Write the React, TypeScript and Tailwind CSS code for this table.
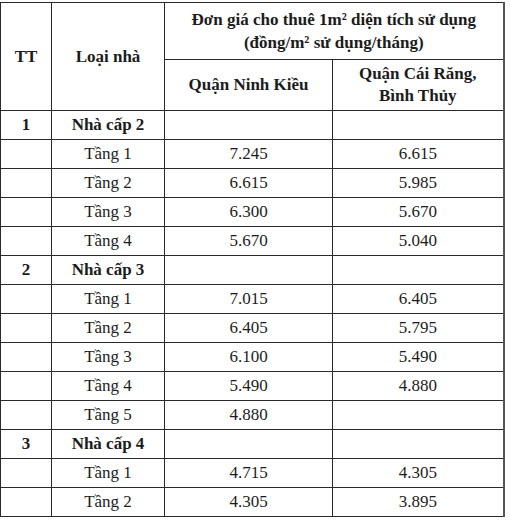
const groups = [
  {
    tt: '1',
    name: 'Nhà cấp 2',
    rows: [
      ['Tầng 1', '7.245', '6.615'],
      ['Tầng 2', '6.615', '5.985'],
      ['Tầng 3', '6.300', '5.670'],
      ['Tầng 4', '5.670', '5.040'],
    ],
  },
  {
    tt: '2',
    name: 'Nhà cấp 3',
    rows: [
      ['Tầng 1', '7.015', '6.405'],
      ['Tầng 2', '6.405', '5.795'],
      ['Tầng 3', '6.100', '5.490'],
      ['Tầng 4', '5.490', '4.880'],
      ['Tầng 5', '4.880', ''],
    ],
  },
  {
    tt: '3',
    name: 'Nhà cấp 4',
    rows: [
      ['Tầng 1', '4.715', '4.305'],
      ['Tầng 2', '4.305', '3.895'],
    ],
  },
];

const cell = 'border border-[#2a2a2a] text-center align-middle p-0';

export default function App() {
  return (
    <div className="w-[510px] h-[526px] bg-white pt-[2px] text-[#1c1c1c] font-['Liberation_Serif',serif] text-[17px]">
      <table className="table-fixed border-collapse w-[503px] border-r-2 border-r-[#555]">
        <colgroup>
          <col className="w-[51px]" />
          <col className="w-[113px]" />
          <col className="w-[168px]" />
          <col className="w-[171px]" />
        </colgroup>
        <thead>
          <tr className="h-[57px]">
            <th rowSpan={2} className={`${cell} font-bold`}>TT</th>
            <th rowSpan={2} className={`${cell} font-bold`}>Loại nhà</th>
            <th colSpan={2} className={`${cell} font-bold leading-[23px] border-r-2 border-r-[#555]`}>
              Đơn giá cho thuê 1m² diện tích sử dụng
              <br />
              (đồng/m² sử dụng/tháng)
            </th>
          </tr>
          <tr className="h-[51px]">
            <th className={`${cell} font-bold`}>Quận Ninh Kiều</th>
            <th className={`${cell} font-bold leading-[22px] border-r-2 border-r-[#555]`}>
              Quận Cái Răng,
              <br />
              Bình Thủy
            </th>
          </tr>
        </thead>
        <tbody>
          {groups.map((g) => (
            <>
              <tr key={g.tt} className="h-[29px]">
                <td className={`${cell} font-bold`}>{g.tt}</td>
                <td className={`${cell} font-bold`}>{g.name}</td>
                <td className={cell}></td>
                <td className={`${cell} border-r-2 border-r-[#555]`}></td>
              </tr>
              {g.rows.map((r) => (
                <tr key={g.tt + r[0]} className="h-[29px]">
                  <td className={cell}></td>
                  <td className={cell}>{r[0]}</td>
                  <td className={cell}>{r[1]}</td>
                  <td className={`${cell} border-r-2 border-r-[#555]`}>{r[2]}</td>
                </tr>
              ))}
            </>
          ))}
        </tbody>
      </table>
    </div>
  );
}
